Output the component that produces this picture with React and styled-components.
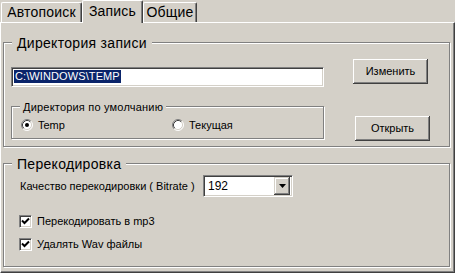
import React from 'react';
import styled, { createGlobalStyle } from 'styled-components';

const GlobalStyle = createGlobalStyle`
  html, body {
    margin: 0;
    padding: 0;
    background: #d4d0c8;
  }
  body {
    font-family: "Liberation Sans", Arial, sans-serif;
    color: #000;
  }
`;

const Radio = ({ checked }) => (
    <RadioBox>
        <svg width="12" height="12" viewBox="0 0 12 12">
            <circle cx="6" cy="6" r="5" fill="#fff"/>
            <path d="M2.11 9.89 A5.5 5.5 0 0 1 9.89 2.11" stroke="#808080" fill="none"/>
            <path d="M9.89 2.11 A5.5 5.5 0 0 1 2.11 9.89" stroke="#fff" fill="none"/>
            <path d="M2.82 9.18 A4.5 4.5 0 0 1 9.18 2.82" stroke="#404040" fill="none"/>
            <path d="M9.18 2.82 A4.5 4.5 0 0 1 2.82 9.18" stroke="#d4d0c8" fill="none"/>
            {checked && <circle cx="6" cy="6" r="2" fill="#000"/>}
        </svg>
    </RadioBox>
)

const Check = () => (
    <CheckBox>
        <svg width="9" height="9" viewBox="0 0 9 9">
            <path d="M1 3.5 L3.5 6 L8 1.5" stroke="#000" strokeWidth="2" fill="none"/>
        </svg>
    </CheckBox>
)

const App = () => {
    return(
        <Window>
            <GlobalStyle/>
            <TabStrip>
                <Tab $width={81}>Автопоиск</Tab>
                <Tab $width={61} $active>Запись</Tab>
                <Tab $width={54}>Общие</Tab>
            </TabStrip>
            <Panel>
                <Group>
                    <GroupTitle>Директория записи</GroupTitle>
                    <DirBody>
                        <TopRow>
                            <Edit>
                                <Selected>C:\WINDOWS\TEMP</Selected>
                            </Edit>
                            <Button $left={29}>Изменить</Button>
                        </TopRow>
                        <BottomRow>
                            <InnerGroup>
                                <SmallTitle>Директория по умолчанию</SmallTitle>
                                <RadioItem $width={151}>
                                    <Radio checked/>
                                    <span>Temp</span>
                                </RadioItem>
                                <RadioItem>
                                    <Radio/>
                                    <span>Текущая</span>
                                </RadioItem>
                            </InnerGroup>
                            <Button $left={31} $bottom={-1}>Открыть</Button>
                        </BottomRow>
                    </DirBody>
                </Group>
                <Group $top={16}>
                    <GroupTitle>Перекодировка</GroupTitle>
                    <CodecBody>
                        <ComboRow>
                            <Label>Качество перекодировки ( Bitrate )</Label>
                            <Combo>
                                <ComboText>192</ComboText>
                                <DropButton>
                                    <svg width="7" height="4" viewBox="0 0 7 4">
                                        <path d="M0 0 H7 L3.5 4 Z" fill="#000"/>
                                    </svg>
                                </DropButton>
                            </Combo>
                        </ComboRow>
                        <CheckRow $top={18}>
                            <Check/>
                            <span>Перекодировать в mp3</span>
                        </CheckRow>
                        <CheckRow $top={10}>
                            <Check/>
                            <span>Удалять Wav файлы</span>
                        </CheckRow>
                    </CodecBody>
                </Group>
            </Panel>
        </Window>
    )
}

const Window = styled.div`
  width: 455px;
  height: 273px;
  background: #d4d0c8;
  overflow: hidden;
`;

const TabStrip = styled.div`
  display: flex;
  align-items: flex-end;
  height: 22px;
  padding-left: 1px;
  position: relative;
  z-index: 1;
`;

const Tab = styled.div`
  box-sizing: border-box;
  width: ${p => p.$width}px;
  height: ${p => p.$active ? 23 : 20}px;
  margin-bottom: ${p => p.$active ? -1 : 0}px;
  border-top: 1px solid #fff;
  border-left: 1px solid #fff;
  border-right: 1px solid #404040;
  border-radius: 2px 2px 0 0;
  box-shadow: inset -1px 0 #808080;
  background: #d4d0c8;
  font-size: 14px;
  letter-spacing: 0.2px;
  line-height: ${p => p.$active ? 20 : 19}px;
  text-align: center;
  white-space: nowrap;
`;

const Panel = styled.div`
  box-sizing: border-box;
  height: 251px;
  border-top: 1px solid #fff;
  border-left: 1px solid #fff;
  border-right: 1px solid #404040;
  border-bottom: 1px solid #404040;
  box-shadow: inset -1px -1px #808080;
  padding: 19px 0 0 2px;
`;

const Group = styled.div`
  position: relative;
  box-sizing: border-box;
  width: 447px;
  margin-top: ${p => p.$top || 0}px;
  border: 1px solid #808080;
  box-shadow: inset 1px 1px #fff, 1px 1px #fff;
`;

const GroupTitle = styled.span`
  position: absolute;
  top: -8px;
  left: 8px;
  padding: 0 5px;
  background: #d4d0c8;
  font-size: 14px;
  letter-spacing: 0.3px;
  line-height: 16px;
  white-space: nowrap;
`;

const SmallTitle = styled(GroupTitle)`
  top: -7px;
  padding: 0 3px;
  font-size: 11px;
  letter-spacing: 0.2px;
  line-height: 14px;
`;

const DirBody = styled.div`
  padding: 16px 0 6px 7px;
`;

const TopRow = styled.div`
  display: flex;
  align-items: flex-start;
`;

const BottomRow = styled.div`
  display: flex;
  align-items: flex-end;
  margin-top: 19px;
`;

const Sunken = styled.div`
  box-sizing: border-box;
  background: #fff;
  border-top: 1px solid #808080;
  border-left: 1px solid #808080;
  border-right: 1px solid #fff;
  border-bottom: 1px solid #fff;
  box-shadow: inset 1px 1px #404040, inset -1px -1px #d4d0c8;
`;

const Edit = styled(Sunken)`
  width: 313px;
  height: 20px;
  margin-top: 8px;
  padding: 2px 0 0 2px;
  font-size: 11px;
  line-height: 13px;
`;

const Selected = styled.span`
  display: inline-block;
  background: #0a246a;
  color: #fff;
  padding: 0 1px;
  letter-spacing: 0.1px;
`;

const Button = styled.div`
  box-sizing: border-box;
  flex-shrink: 0;
  width: 75px;
  height: 25px;
  margin-left: ${p => p.$left || 0}px;
  margin-bottom: ${p => p.$bottom || 0}px;
  background: #d4d0c8;
  box-shadow: inset -1px -1px #404040, inset 1px 1px #fff, inset -2px -2px #808080, inset 2px 2px #d4d0c8;
  font-size: 11px;
  line-height: 24px;
  text-align: center;
`;

const InnerGroup = styled.div`
  position: relative;
  box-sizing: border-box;
  flex-shrink: 0;
  width: 313px;
  height: 33px;
  margin-bottom: 1px;
  border: 1px solid #808080;
  box-shadow: inset 1px 1px #fff, 1px 1px #fff;
  display: flex;
  align-items: flex-start;
  padding: 12px 0 0 9px;
`;

const RadioItem = styled.label`
  display: flex;
  align-items: center;
  gap: 5px;
  width: ${p => p.$width ? `${p.$width}px` : 'auto'};
  font-size: 11px;
  line-height: 12px;
`;

const RadioBox = styled.span`
  display: block;
  width: 12px;
  height: 12px;
  svg {
    display: block;
  }
`;

const CodecBody = styled.div`
  padding: 11px 0 15px 15px;
`;

const ComboRow = styled.div`
  display: flex;
  align-items: center;
`;

const Label = styled.span`
  flex-shrink: 0;
  width: 183px;
  margin-left: 1px;
  font-size: 11px;
  white-space: nowrap;
`;

const Combo = styled(Sunken)`
  display: flex;
  align-items: center;
  width: 90px;
  height: 22px;
  padding: 2px;
`;

const ComboText = styled.span`
  flex: 1;
  padding-left: 2px;
  font-size: 12px;
`;

const DropButton = styled.div`
  box-sizing: border-box;
  width: 16px;
  height: 18px;
  display: flex;
  align-items: center;
  justify-content: center;
  background: #d4d0c8;
  box-shadow: inset -1px -1px #404040, inset 1px 1px #d4d0c8, inset -2px -2px #808080, inset 2px 2px #fff;
  svg {
    display: block;
  }
`;

const CheckRow = styled.label`
  display: flex;
  align-items: center;
  gap: 5px;
  margin-top: ${p => p.$top}px;
  font-size: 11px;
  line-height: 13px;
`;

const CheckBox = styled(Sunken)`
  width: 13px;
  height: 13px;
  display: flex;
  align-items: center;
  justify-content: center;
  svg {
    display: block;
  }
`;

export default App;
